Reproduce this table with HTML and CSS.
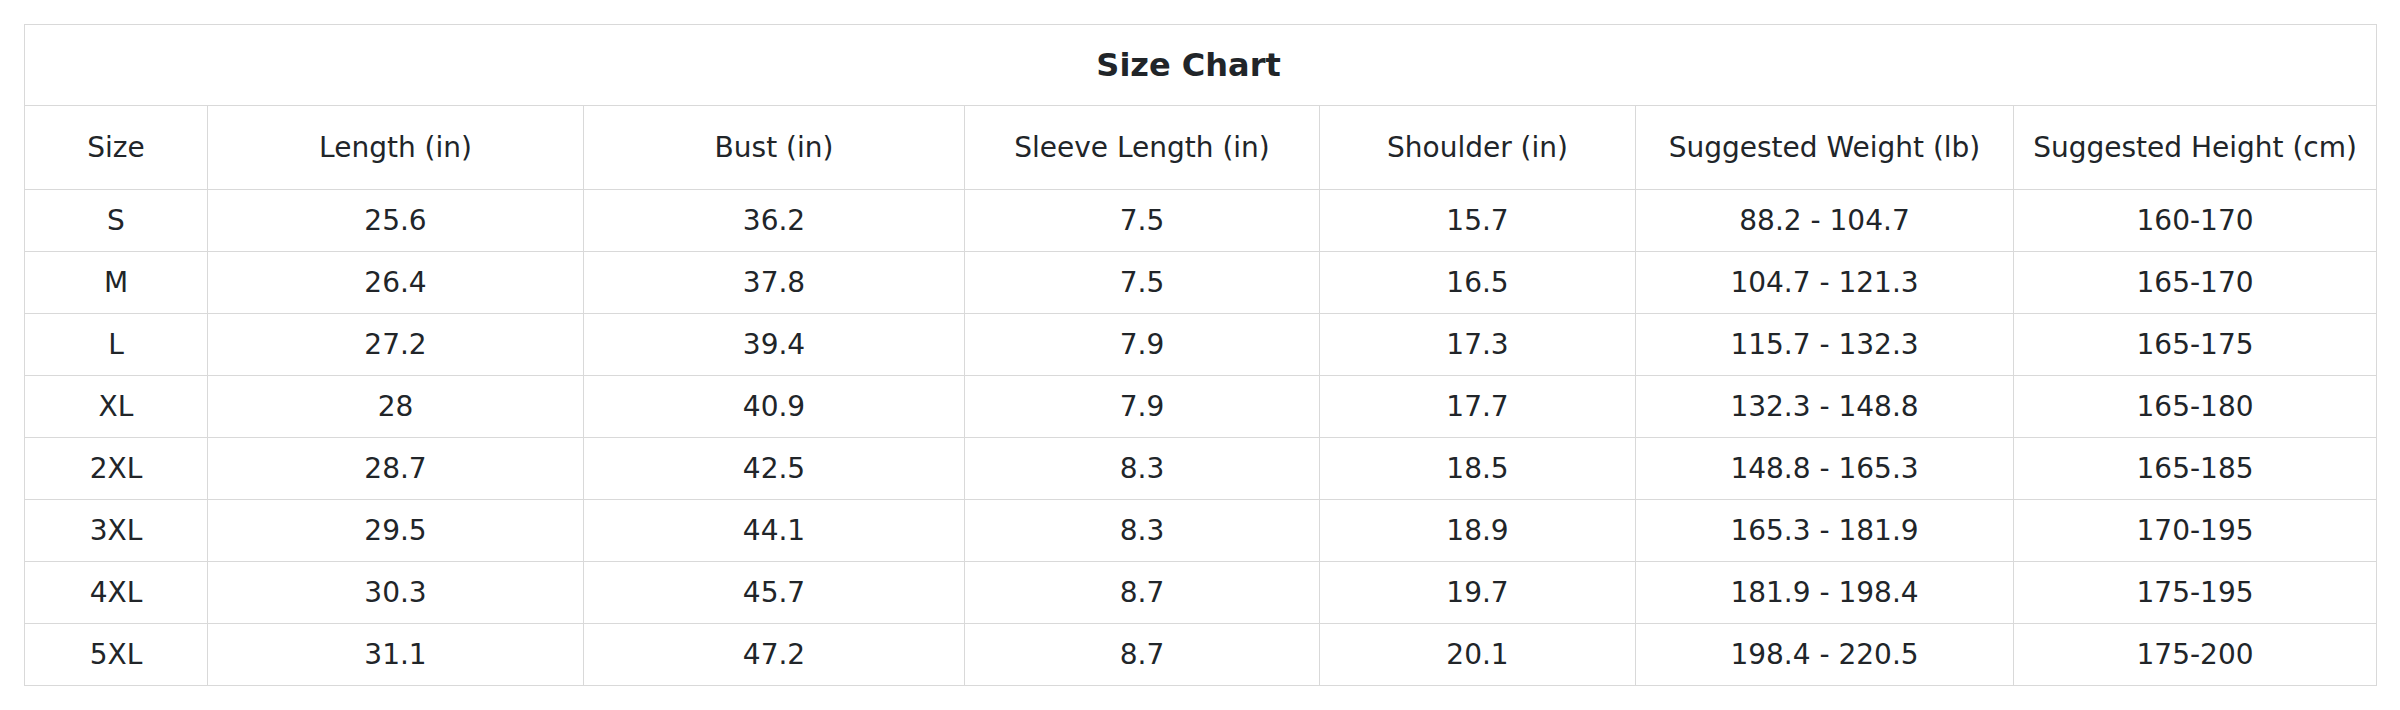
FILE: index.html
```html
<!DOCTYPE html>
<html lang="en">
<head>
<meta charset="utf-8">
<title>Size Chart</title>
<link rel="stylesheet" href="styles.css">
</head>
<body>
<div class="wrap">
  <table class="chart">
    <colgroup>
      <col class="c1"><col class="c2"><col class="c3"><col class="c4"><col class="c5"><col class="c6"><col class="c7">
    </colgroup>
    <thead>
      <tr class="title-row"><th colspan="7">Size Chart</th></tr>
      <tr class="head-row">
        <th>Size</th><th>Length (in)</th><th>Bust (in)</th><th>Sleeve Length (in)</th><th>Shoulder (in)</th><th>Suggested Weight (lb)</th><th>Suggested Height (cm)</th>
      </tr>
    </thead>
    <tbody>
      <tr><td>S</td><td>25.6</td><td>36.2</td><td>7.5</td><td>15.7</td><td>88.2 - 104.7</td><td>160-170</td></tr>
      <tr><td>M</td><td>26.4</td><td>37.8</td><td>7.5</td><td>16.5</td><td>104.7 - 121.3</td><td>165-170</td></tr>
      <tr><td>L</td><td>27.2</td><td>39.4</td><td>7.9</td><td>17.3</td><td>115.7 - 132.3</td><td>165-175</td></tr>
      <tr><td>XL</td><td>28</td><td>40.9</td><td>7.9</td><td>17.7</td><td>132.3 - 148.8</td><td>165-180</td></tr>
      <tr><td>2XL</td><td>28.7</td><td>42.5</td><td>8.3</td><td>18.5</td><td>148.8 - 165.3</td><td>165-185</td></tr>
      <tr><td>3XL</td><td>29.5</td><td>44.1</td><td>8.3</td><td>18.9</td><td>165.3 - 181.9</td><td>170-195</td></tr>
      <tr><td>4XL</td><td>30.3</td><td>45.7</td><td>8.7</td><td>19.7</td><td>181.9 - 198.4</td><td>175-195</td></tr>
      <tr><td>5XL</td><td>31.1</td><td>47.2</td><td>8.7</td><td>20.1</td><td>198.4 - 220.5</td><td>175-200</td></tr>
    </tbody>
  </table>
</div>
</body>
</html>
```

FILE: styles.css
```css
html, body {
  margin: 0;
  padding: 0;
  background: #ffffff;
}

.wrap {
  padding: 24px 24px 0 24px;
}

.chart {
  width: 100%;
  border-collapse: collapse;
  table-layout: fixed;
  font-family: "DejaVu Sans", Verdana, sans-serif;
  color: #212529;
}

.c1 { width: 183px; }
.c2 { width: 376px; }
.c3 { width: 381px; }
.c4 { width: 355px; }
.c5 { width: 316px; }
.c6 { width: 378px; }
.c7 { width: 363px; }

.chart th,
.chart td {
  border: 1px solid #d9d9d9;
  text-align: center;
  vertical-align: middle;
  padding: 0;
  white-space: nowrap;
}

.title-row th {
  font-size: 32px;
  font-weight: bold;
  line-height: 80px;
  padding-right: 24px;
}

.head-row th {
  font-size: 28px;
  font-weight: normal;
  line-height: 83px;
}

.chart td {
  font-size: 28px;
  line-height: 61px;
}
```
